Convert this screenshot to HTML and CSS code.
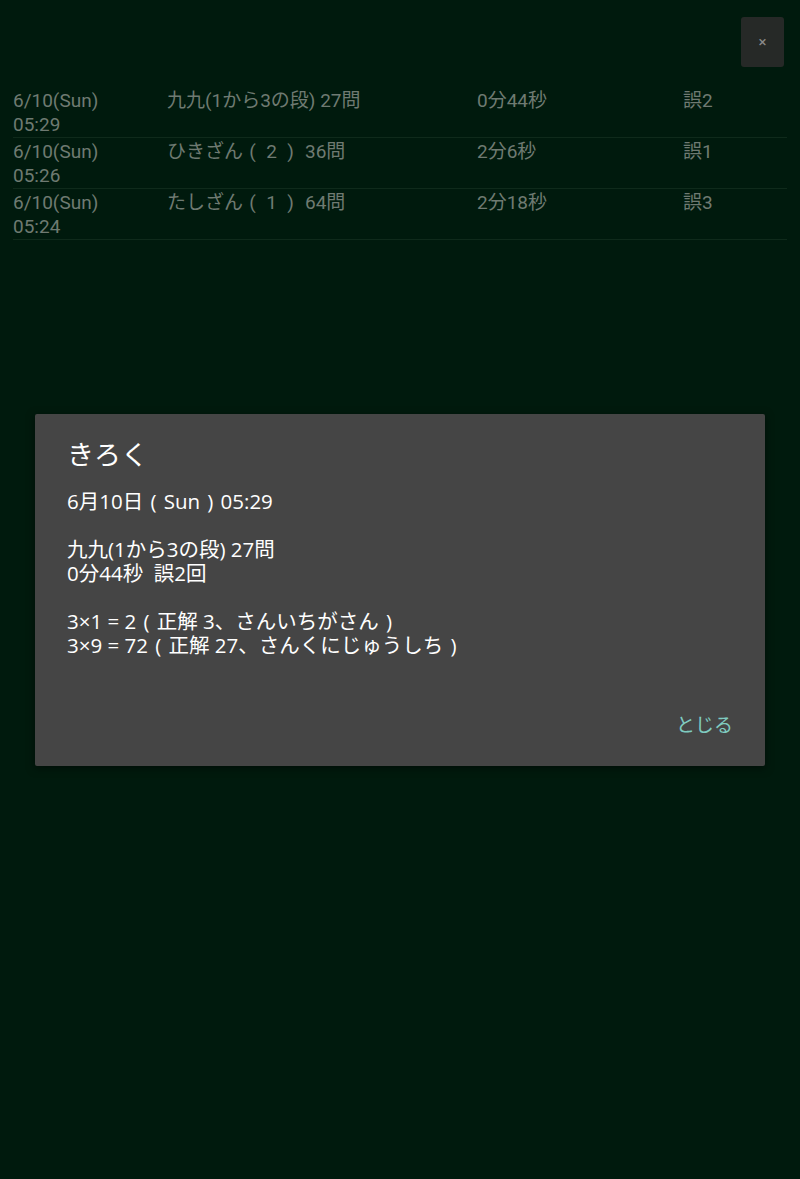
FILE: index.html
```html
<!DOCTYPE html>
<html lang="ja">
<head>
<meta charset="utf-8">
<link rel="stylesheet" href="styles.css">
</head>
<body>
<div class="page">
  <div class="topbar">
    <div class="close-btn">×</div>
  </div>
  <div class="table">
    <div class="row">
      <div class="c c1">6/10(Sun)<br>05:29</div>
      <div class="c c2">九九(1から3の段) 27問</div>
      <div class="c c3">0分44秒</div>
      <div class="c c4">誤2</div>
    </div>
    <div class="row">
      <div class="c c1">6/10(Sun)<br>05:26</div>
      <div class="c c2">ひきざん<span class="p">(</span><span class="fw">2</span><span class="p pc">)</span>36問</div>
      <div class="c c3">2分6秒</div>
      <div class="c c4">誤1</div>
    </div>
    <div class="row">
      <div class="c c1">6/10(Sun)<br>05:24</div>
      <div class="c c2">たしざん<span class="p">(</span><span class="fw">1</span><span class="p pc">)</span>64問</div>
      <div class="c c3">2分18秒</div>
      <div class="c c4">誤3</div>
    </div>
  </div>
</div>
<div class="dialog">
  <div class="title">きろく</div>
  <div class="body">
    <p>6月10日<span class="p">(</span>Sun<span class="p">)</span>05:29</p>
    <p>九九(1から3の段) 27問<br>0分44秒&nbsp;&nbsp;誤2回</p>
    <p>3×1 = 2<span class="p">(</span>正解 3、さんいちがさん<span class="p">)</span><br>3×9 = 72<span class="p">(</span>正解 27、さんくにじゅうしち<span class="p">)</span></p>
  </div>
  <div class="actions"><span class="btn">とじる</span></div>
</div>
</body>
</html>
```
FILE: styles.css
```css
html, body {
  margin: 0;
  padding: 0;
  background: #001a0d;
  height: 100%;
}
body {
  font-family: Roboto, "Noto Sans CJK JP", sans-serif;
  width: 800px;
  height: 1179px;
  position: relative;
  overflow: hidden;
}
.page {
  padding: 17px 13px 0 13px;
}
.topbar {
  display: flex;
  justify-content: flex-end;
  margin-right: 3px;
}
.close-btn {
  width: 43px;
  height: 50px;
  background: #262927;
  border-radius: 3px;
  color: #8a8a8a;
  font-size: 15px;
  display: flex;
  align-items: center;
  justify-content: center;
}
.table {
  margin-top: 20px;
}
.row {
  display: grid;
  grid-template-columns: 154px 310px 206px 1fr;
  border-bottom: 1px solid #0f2a1b;
  padding-top: 2px;
  color: #6f7a72;
  font-size: 19px;
  line-height: 24px;
}
.p {
  display: inline-block;
  width: 1em;
  text-align: center;
}
.pc {
  margin-right: 5px;
}
.fw {
  display: inline-block;
  width: 1em;
  text-align: center;
}
.dialog {
  position: absolute;
  left: 35px;
  top: 414px;
  width: 730px;
  height: 352px;
  background: #454545;
  border-radius: 2px;
  box-shadow: 0 2px 8px rgba(0,0,0,0.5);
  box-sizing: border-box;
  padding: 24px 32px 0 32px;
  display: flex;
  flex-direction: column;
  color: #ffffff;
}
.title {
  font-size: 27px;
  line-height: 36px;
}
.body {
  margin-top: 15px;
  font-family: "Open Sans", "Noto Sans CJK JP", sans-serif;
  font-size: 20.5px;
  line-height: 24px;
}
.body p {
  margin: 0 0 24px 0;
}
.actions {
  margin-top: auto;
  display: flex;
  justify-content: flex-end;
  padding-bottom: 28px;
}
.btn {
  color: #7fcbc0;
  font-size: 19px;
  line-height: 24px;
}
```
